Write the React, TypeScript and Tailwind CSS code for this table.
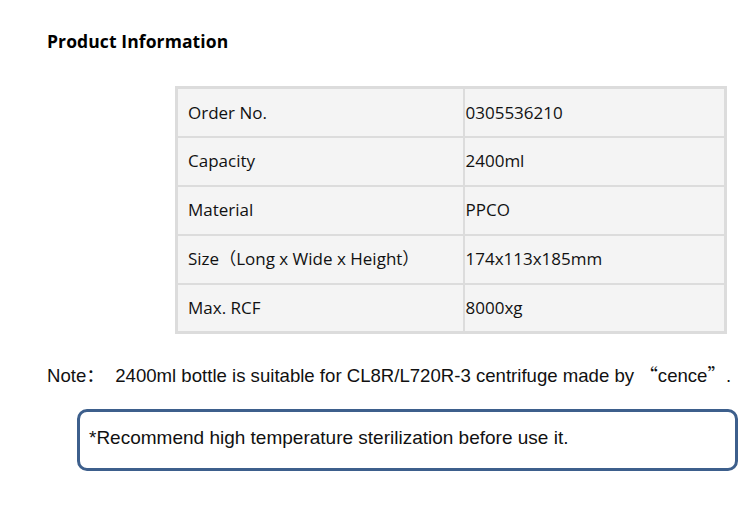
import React from "react";

const rows: [string, string][] = [
  ["Order No.", "0305536210"],
  ["Capacity", "2400ml"],
  ["Material", "PPCO"],
  ["Size（Long x Wide x Height）", "174x113x185mm"],
  ["Max. RCF", "8000xg"],
];

export default function App() {
  return (
    <div className="flex h-[514px] w-[750px] flex-col overflow-hidden bg-white text-black">
      <h1 className="pl-[47px] pt-[30px] font-['Open_Sans','Noto_Sans_CJK_SC',sans-serif] text-[17.5px] font-bold leading-[22px] tracking-[0.1px]">
        Product Information
      </h1>
      <div className="ml-[175px] mt-[34px] w-[552px]">
        <table className="w-full border-collapse border-[3px] border-[#dcdcdc] bg-[#f4f4f4] font-['Open_Sans','Noto_Sans_CJK_SC',sans-serif] text-[17px] text-[#111]">
          <tbody>
            {rows.map(([k, v]) => (
              <tr key={k} className="h-[49px]">
                <td className="w-[287px] border-2 border-[#dcdcdc] pl-[10px] align-middle">{k}</td>
                <td className="border-2 border-[#dcdcdc] pl-px align-middle">{v}</td>
              </tr>
            ))}
          </tbody>
        </table>
      </div>
      <p className="ml-[47px] mt-[29px] h-[22px] whitespace-nowrap font-['Liberation_Sans','Noto_Sans_CJK_SC',sans-serif] text-[18.6px] leading-[22px] text-[#111]">
        Note<span className="font-['Noto_Sans_CJK_SC',sans-serif]">：</span>&nbsp;&nbsp;2400ml bottle is suitable for CL8R/L720R-3 centrifuge made by&nbsp;<span className="font-['Noto_Sans_CJK_SC',sans-serif]">“</span>cence<span className="font-['Noto_Sans_CJK_SC',sans-serif]">”</span>.
      </p>
      <div className="ml-[77px] mt-[24px] h-[62px] w-[661px] whitespace-nowrap rounded-[10px] border-[3px] border-[#3d5f8c] pl-[9px] pt-[15px] font-['Liberation_Sans','Noto_Sans_CJK_SC',sans-serif] text-[19px] leading-[22px] text-[#111]">
        *Recommend high temperature sterilization before use it.
      </div>
    </div>
  );
}
